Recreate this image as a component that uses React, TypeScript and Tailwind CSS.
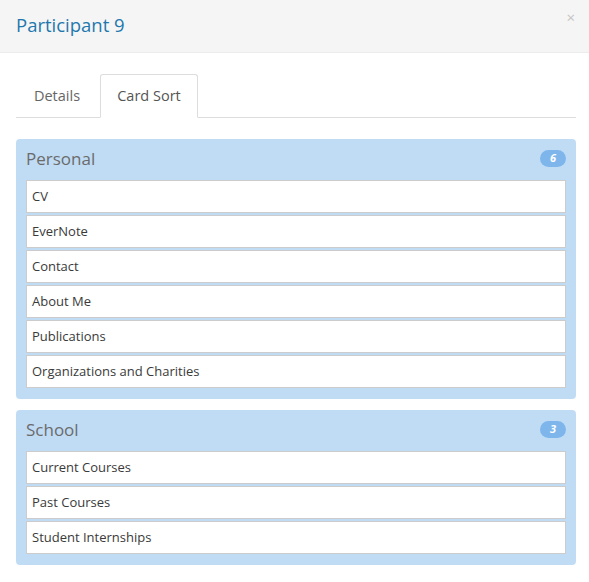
import React from "react";

const groups = [
  {
    name: "Personal",
    items: ["CV", "EverNote", "Contact", "About Me", "Publications", "Organizations and Charities"],
  },
  {
    name: "School",
    items: ["Current Courses", "Past Courses", "Student Internships"],
  },
];

export default function App() {
  return (
    <div
      className="w-[589px] h-[582px] bg-white overflow-hidden"
      style={{ fontFamily: '"Open Sans", "Lato", sans-serif' }}
    >
      <div className="h-[53px] bg-[#f5f5f5] border-b border-[#ececec] flex items-center justify-between pl-4 pr-[14px]">
        <div className="text-[18.5px] text-[#1f78ad] -mt-[3px]">Participant 9</div>
        <div className="text-[15px] text-[#c4c4c4] -mt-[17px]">×</div>
      </div>
      <div className="pl-4 pr-[13px] pt-[21px]">
        <div className="flex border-b border-[#dddddd] h-[44px]">
          <div className="mr-[2px] w-[82px] flex items-center justify-center text-[14.5px] text-[#666] border border-transparent">
            Details
          </div>
          <div className="w-[98px] flex items-center justify-center text-[14.5px] text-[#555] bg-white border border-[#dddddd] border-b-transparent rounded-t-[3px] -mb-px">
            Card Sort
          </div>
        </div>
        <div className="mt-[21px] flex flex-col gap-[11px]">
          {groups.map((g) => (
            <div key={g.name} className="bg-[#c0dcf5] rounded-[4px] px-[10px] pb-[11px]">
              <div className="h-[41px] flex items-center justify-between">
                <div className="text-[17px] text-[#6b6b6b] -mt-[1px]">{g.name}</div>
                <div className="w-[26px] h-[17px] rounded-full bg-[#7eb6ec] text-white text-[11px] font-bold italic flex items-center justify-center -mt-[2px]">
                  {g.items.length}
                </div>
              </div>
              <div className="flex flex-col gap-[2px]">
                {g.items.map((it) => (
                  <div
                    key={it}
                    className="h-[33px] bg-white border border-[#cccccc] flex items-center pl-[5px] pt-px text-[13px] text-[#3a3a3a]"
                  >
                    {it}
                  </div>
                ))}
              </div>
            </div>
          ))}
        </div>
      </div>
    </div>
  );
}
